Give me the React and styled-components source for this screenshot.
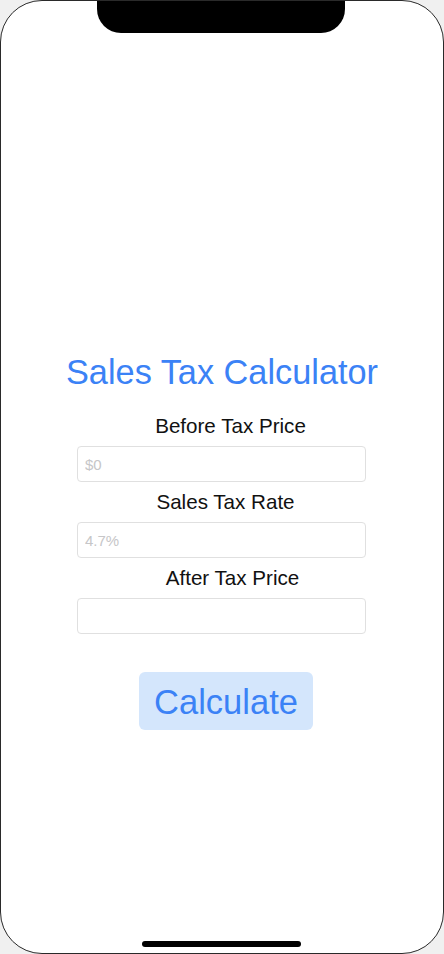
import React from "react";
import styled, { createGlobalStyle } from "styled-components";

const GlobalStyle = createGlobalStyle`
  html, body {
    margin: 0;
    padding: 0;
    background: #f0f0f0;
  }
  * {
    box-sizing: border-box;
  }
`;

const Phone = styled.div`
  position: relative;
  width: 444px;
  height: 954px;
  background: #fff;
  border: 1px solid #2a2a2a;
  border-radius: 42px;
  overflow: hidden;
  font-family: "Liberation Sans", Arial, sans-serif;
`;

const Notch = styled.div`
  position: absolute;
  top: -1px;
  left: 96px;
  width: 248px;
  height: 33px;
  background: #000;
  border-radius: 0 0 24px 24px;
`;

const HomeBar = styled.div`
  position: absolute;
  bottom: 6px;
  left: 141px;
  width: 159px;
  height: 6px;
  background: #000;
  border-radius: 3px;
`;

const Screen = styled.div`
  display: flex;
  flex-direction: column;
  align-items: center;
  padding-top: 351px;
`;

const Title = styled.h1`
  margin: 0 0 14px;
  font-size: 34.3px;
  line-height: 40px;
  font-weight: 400;
  color: #3b82f6;
`;

const Form = styled.div`
  display: flex;
  flex-direction: column;
  width: 289px;
  margin-left: -1px;
`;

const Label = styled.div`
  height: 40px;
  line-height: 40px;
  font-size: 20.6px;
  color: #111;
  text-align: center;
  white-space: nowrap;
  padding-left: ${(p) => p.$shift || 0}px;
`;

const Input = styled.input`
  height: 36px;
  width: 100%;
  border: 1px solid #e0e0e0;
  border-radius: 4px;
  padding: 0 7px;
  font-family: inherit;
  font-size: 15px;
  color: #222;
  outline: none;
  background: #fff;
  &::placeholder {
    color: #c6c6c8;
  }
`;

const Button = styled.button`
  margin-top: 38px;
  margin-left: 8px;
  height: 58px;
  padding: 1px 15px 0;
  border: none;
  border-radius: 6px;
  background: #d4e6fc;
  color: #3b82f6;
  font-family: inherit;
  font-size: 34.5px;
  line-height: 40px;
  cursor: pointer;
`;

const fields = [
  { label: "Before Tax Price", placeholder: "$0", shift: 18 },
  { label: "Sales Tax Rate", placeholder: "4.7%", shift: 8 },
  { label: "After Tax Price", placeholder: "", shift: 22 },
];

const App = () => {
  return (
    <>
      <GlobalStyle />
      <Phone>
        <Notch />
        <Screen>
          <Title>Sales Tax Calculator</Title>
          <Form>
            {fields.map((f) => (
              <React.Fragment key={f.label}>
                <Label $shift={f.shift}>{f.label}</Label>
                <Input placeholder={f.placeholder} />
              </React.Fragment>
            ))}
          </Form>
          <Button>Calculate</Button>
        </Screen>
        <HomeBar />
      </Phone>
    </>
  );
};

export default App;
